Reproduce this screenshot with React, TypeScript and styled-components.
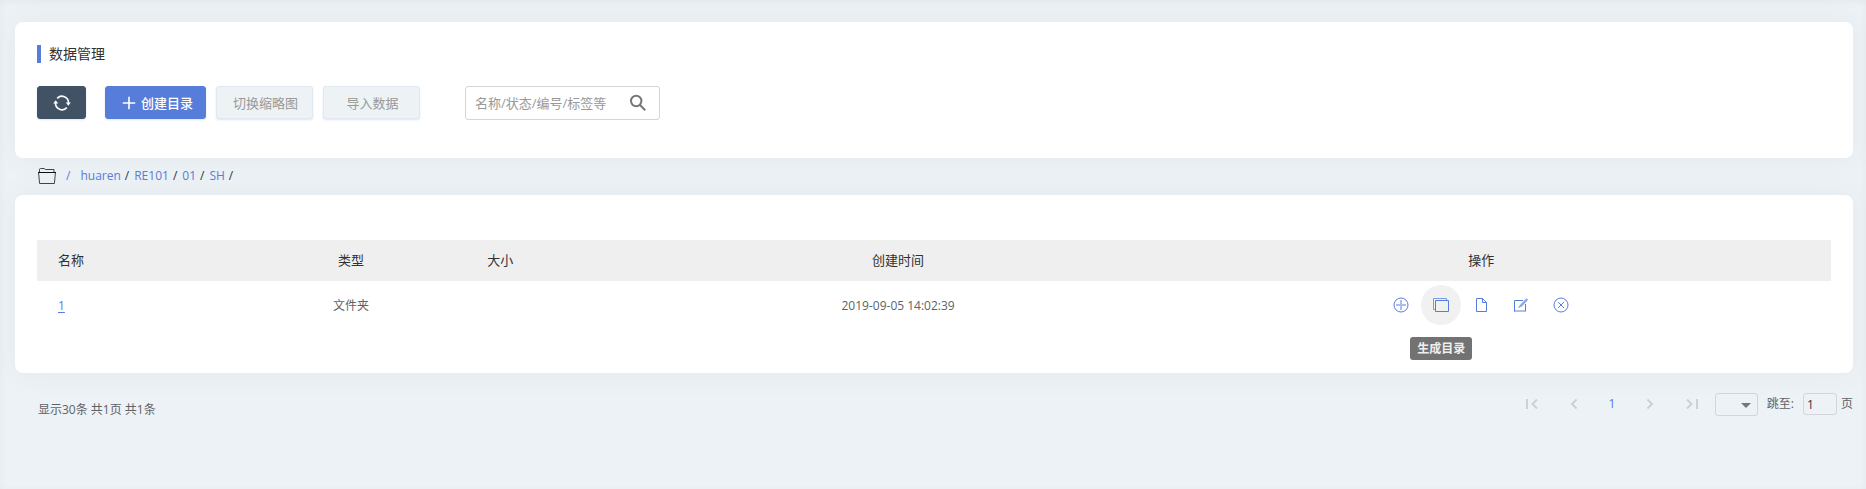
import React from "react";
import styled, { createGlobalStyle } from "styled-components";

const GlobalStyle = createGlobalStyle`
  * { box-sizing: border-box; }
  body {
    margin: 0;
    background: #edf2f6;
    color: #606266;
    font: 12px/20px "Open Sans", "Noto Sans CJK SC", sans-serif;
  }
  button, input, select { font: inherit; }
  a { color: #577ddb; text-decoration: none; }
`;

const Page = styled.main`
  min-height: 100vh;
  padding: 22px 13px 40px 15px;
  box-shadow: inset 0 2px 6px rgba(60, 80, 100, 0.06);
`;

const Card = styled.section<{ $top: number; $bottom: number }>`
  padding: ${(p) => p.$top}px 22px ${(p) => p.$bottom}px;
  border-radius: 8px;
  background: #fff;
  box-shadow: 0 0 30px rgba(60, 80, 100, 0.06);
`;

const Title = styled.h1`
  margin: 0 0 23px;
  padding-left: 8px;
  border-left: 4px solid #577ddb;
  color: #303133;
  font-size: 14px;
  font-weight: 400;
  line-height: 18px;
`;

const Toolbar = styled.div`
  display: flex;
  align-items: flex-start;
  gap: 10px;
`;

const Button = styled.button<{ $tone?: "dark" | "primary" }>`
  display: flex;
  align-items: center;
  justify-content: center;
  gap: 5px;
  width: ${(p) => (p.$tone === "dark" ? 49 : p.$tone === "primary" ? 101 : 97)}px;
  height: 33px;
  margin-right: ${(p) => (p.$tone === "dark" ? 9 : 0)}px;
  padding: 0 0 0 ${(p) => (p.$tone === "primary" ? 4 : p.$tone === "dark" ? 0 : 2)}px;
  border: 1px solid ${(p) => (p.$tone === "dark" ? "#425265" : p.$tone === "primary" ? "#577ddb" : "#e1e8f0")};
  border-radius: 3px;
  background: ${(p) => (p.$tone === "dark" ? "#425265" : p.$tone === "primary" ? "#577ddb" : "#edf2f5")};
  box-shadow: 0 1px 2px rgba(87, 125, 219, 0.2);
  color: ${(p) => (p.$tone ? "#fff" : "#999")};
  font-size: 13px;
  font-weight: ${(p) => (p.$tone ? 500 : 400)};
`;

const SearchBox = styled.label`
  display: flex;
  align-items: center;
  width: 195px;
  height: 34px;
  margin-left: 35px;
  padding: 0 12px 0 9px;
  border: 1px solid #d3d5d8;
  border-radius: 3px;
  color: #777;

  input {
    flex: 1;
    min-width: 0;
    padding: 0;
    border: 0;
    outline: 0;
    background: none;
    font-size: 13px;
  }
  input::placeholder { color: #999; opacity: 1; }
`;

const Breadcrumb = styled.nav`
  display: flex;
  align-items: center;
  height: 37px;
  padding: 0 23px 2px;
  color: #303133;

  svg { margin: 2px 10px 0 0; }
`;

const Crumb = styled.span<{ $root?: boolean }>`
  margin-right: ${(p) => (p.$root ? 10 : 5)}px;
  color: ${(p) => (p.$root ? "#577ddb" : "inherit")};

  a { margin-right: 4px; }
`;

const Table = styled.table`
  width: 100%;
  border-collapse: collapse;
  table-layout: fixed;
`;

const HeadCell = styled.th<{ $width: string; $align?: string; $indent?: number }>`
  width: ${(p) => p.$width};
  height: 41px;
  padding: 0 0 2px ${(p) => p.$indent ?? 0}px;
  background: #efefef;
  color: #303133;
  font-size: 13px;
  font-weight: 400;
  text-align: ${(p) => p.$align ?? "center"};
`;

const Cell = styled.td<{ $indent?: number; $controls?: boolean }>`
  height: 48px;
  padding: ${(p) => (p.$controls ? 0 : 2)}px 0 0 ${(p) => p.$indent ?? 0}px;
  text-align: ${(p) => (p.$indent ? "left" : "center")};

  a { text-decoration: underline; text-underline-offset: 2px; }
`;

const Actions = styled.div`
  display: flex;
  justify-content: center;
`;

const ActionButton = styled.button<{ $active?: boolean }>`
  position: relative;
  display: grid;
  place-items: center;
  width: 40px;
  height: 40px;
  padding: 0;
  border: 0;
  border-radius: 50%;
  background: ${(p) => (p.$active ? "#f1f1f1" : "transparent")};
  color: #577ddb;
`;

const Tooltip = styled.span`
  position: absolute;
  top: 52px;
  left: 50%;
  transform: translateX(-50%);
  padding: 0 7px;
  border-radius: 3px;
  background: #727272;
  color: #eee;
  font-weight: 700;
  line-height: 23px;
  white-space: nowrap;
`;

const Footer = styled.footer`
  display: flex;
  align-items: flex-start;
  justify-content: space-between;
  padding: 19px 0 0 23px;
`;

const Summary = styled.p`
  margin: 8px 0 0;
`;

const Pager = styled.div`
  display: flex;
  align-items: center;
  height: 24px;
`;

const PageButton = styled.button<{ $wide?: boolean }>`
  display: grid;
  place-items: center;
  width: ${(p) => (p.$wide ? 46 : 38)}px;
  height: 24px;
  padding: 0;
  border: 0;
  background: none;
  color: #577ddb;

  &:disabled { color: #cdd0d4; }
`;

const SizeSelect = styled.span`
  position: relative;
  display: flex;
  margin-right: 9px;

  select {
    width: 43px;
    height: 23px;
    border: 1px solid #d3d5d8;
    border-radius: 3px;
    background: transparent;
    appearance: none;
  }
  svg {
    position: absolute;
    top: 10px;
    right: 7px;
    pointer-events: none;
  }
`;

const Jump = styled.label`
  display: flex;
  align-items: center;

  input {
    width: 34px;
    height: 22px;
    margin: 0 4px 0 9px;
    padding: 0 3px;
    border: 1px solid #d3d5d8;
    border-radius: 3px;
    background: transparent;
    color: #303133;
  }
`;

const Icon = ({ size = 16, width = 1, children }: { size?: number; width?: number; children: React.ReactNode }) => (
  <svg width={size} height={size} viewBox={`0 0 ${size} ${size}`} fill="none" stroke="currentColor" strokeWidth={width} aria-hidden="true">
    {children}
  </svg>
);

const RefreshIcon = () => (
  <Icon size={18} width={1.6}>
    <path d="M4.200 4.400A6.500 6.500 0 0 1 15.500 9M13.800 13.600A6.500 6.500 0 0 1 2.500 9" />
    <path d="M12.800 8.500h5l-2.500 3.200zM.2 9.500h5L2.700 6.300z" fill="currentColor" stroke="none" />
  </Icon>
);

const PlusIcon = () => (
  <Icon size={14} width={1.6}>
    <path d="M7 .8v12.400M.8 7h12.400" />
  </Icon>
);

const SearchIcon = () => (
  <Icon size={18} width={2}>
    <circle cx="7.200" cy="7" r="5.200" />
    <path d="M10.800 10.800l5.400 5.400" />
  </Icon>
);

const FolderIcon = () => (
  <svg width="18" height="17" viewBox="0 0 18 17" fill="none" stroke="#444" aria-hidden="true">
    <path d="M1.500 4V1.500Q1.500.5 2.500.5H6l1.500 1h8.500v2.500" />
    <path d="M.6 5l1 10.500h14.800l1-10.500" />
    <path d="M0 4.500h18" stroke="#111" />
  </svg>
);

const actions = [
  { label: "添加", icon: <><circle cx="8" cy="8" r="7" /><path d="M8 3v10M3 8h10" strokeWidth="2" opacity=".5" /></> },
  { label: "生成目录", active: true, icon: <><path d="M2.500 3.500h13v11h-13z" /><path d="M2 12.500H.5v-11h13v2" opacity=".75" /></> },
  { label: "文件", icon: <path d="M3.500 1.500h6l4 4v9h-10zM9.500 1.500v4h4" /> },
  { label: "编辑", icon: <><path d="M10 3.500H1.500v11M12.500 7v7" /><path d="M1 14h12" strokeWidth="2" opacity=".5" /><path d="M7.300 9.300l7-7.300" strokeWidth="2.500" opacity=".65" /><path d="M5.800 10.800l1.500-2" /></> },
  { label: "删除", icon: <><circle cx="8" cy="8" r="7" /><path d="M5 5l6 6M11 5l-6 6" /></> },
];

export default function App() {
  return (
    <>
      <GlobalStyle />
      <Page>
        <Card $top={23} $bottom={38}>
          <Title>数据管理</Title>
          <Toolbar>
            <Button $tone="dark" aria-label="刷新"><RefreshIcon /></Button>
            <Button $tone="primary"><PlusIcon />创建目录</Button>
            <Button disabled>切换缩略图</Button>
            <Button disabled>导入数据</Button>
            <SearchBox>
              <input type="text" aria-label="搜索" placeholder="名称/状态/编号/标签等" />
              <SearchIcon />
            </SearchBox>
          </Toolbar>
        </Card>

        <Breadcrumb>
          <FolderIcon />
          <Crumb $root>/</Crumb>
          {["huaren", "RE101", "01", "SH"].map((name) => (
            <Crumb key={name}><a href="#">{name}</a>/</Crumb>
          ))}
        </Breadcrumb>

        <Card $top={45} $bottom={44}>
          <Table>
            <thead>
              <tr>
                <HeadCell $width="13.3%" $align="left" $indent={21}>名称</HeadCell>
                <HeadCell $width="8.4%">类型</HeadCell>
                <HeadCell $width="13.3%" $align="left" $indent={61}>大小</HeadCell>
                <HeadCell $width="26%">创建时间</HeadCell>
                <HeadCell $width="39%">操作</HeadCell>
              </tr>
            </thead>
            <tbody>
              <tr>
                <Cell $indent={21}><a href="#">1</a></Cell>
                <Cell>文件夹</Cell>
                <Cell />
                <Cell>2019-09-05 14:02:39</Cell>
                <Cell $controls>
                  <Actions>
                    {actions.map((a) => (
                      <ActionButton key={a.label} $active={a.active} aria-label={a.label}>
                        <Icon>{a.icon}</Icon>
                        {a.active && <Tooltip role="tooltip">{a.label}</Tooltip>}
                      </ActionButton>
                    ))}
                  </Actions>
                </Cell>
              </tr>
            </tbody>
          </Table>
        </Card>

        <Footer>
          <Summary>显示30条 共1页 共1条</Summary>
          <Pager>
            <PageButton $wide disabled aria-label="首页"><Icon width={2}><path d="M3 3v10M13 3.500L8.500 8l4.500 4.500" /></Icon></PageButton>
            <PageButton disabled aria-label="上一页"><Icon width={2}><path d="M10.500 3.500L6 8l4.500 4.500" /></Icon></PageButton>
            <PageButton>1</PageButton>
            <PageButton disabled aria-label="下一页"><Icon width={2}><path d="M5.500 3.500L10 8l-4.500 4.500" /></Icon></PageButton>
            <PageButton $wide disabled aria-label="末页"><Icon width={2}><path d="M3 3.500L7.500 8 3 12.500M13 3v10" /></Icon></PageButton>
            <SizeSelect>
              <select aria-label="每页条数" defaultValue=""><option value="" /></select>
              <svg width="10" height="5" viewBox="0 0 10 5" fill="#777" aria-hidden="true"><path d="M0 0h10L5 5z" /></svg>
            </SizeSelect>
            <Jump>跳至:<input type="text" defaultValue="1" />页</Jump>
          </Pager>
        </Footer>
      </Page>
    </>
  );
}
